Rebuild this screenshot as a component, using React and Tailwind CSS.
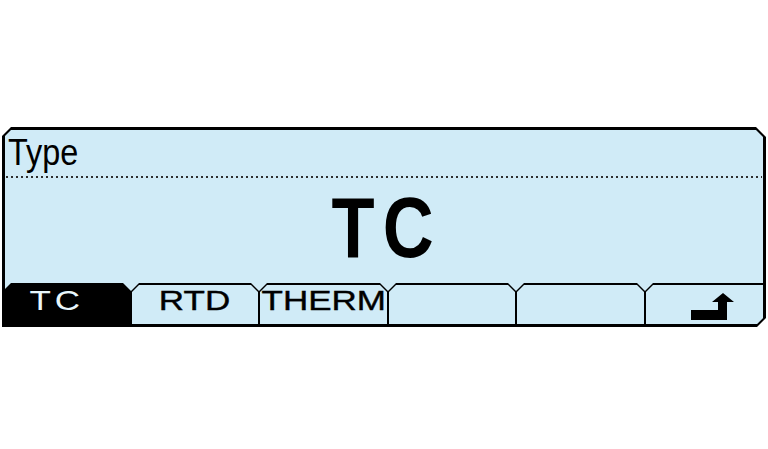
import React from 'react';

const FONT = { fontFamily: '"Liberation Sans", Arial, sans-serif' };

const tabOuter =
  'h-full bg-black pt-[2px] px-[1px] [clip-path:polygon(8px_0,calc(100%_-_8px)_0,100%_8px,100%_100%,0_100%,0_8px)]';
const tabInner =
  'h-full bg-[#d0ebf7] flex justify-center pt-[2px] [clip-path:polygon(7px_0,calc(100%_-_7px)_0,100%_7px,100%_100%,0_100%,0_7px)]';

function Tab({ width, label, active, last, children }) {
  if (active) {
    return (
      <div className={`${width} h-full bg-black flex justify-center pt-[4px] pr-[22px] [clip-path:polygon(6px_0,calc(100%_-_8px)_0,100%_8px,100%_100%,0_100%,0_6px)]`}>
        <span className="inline-block text-[28px] leading-none text-[#e8f6fb] tracking-[3px] scale-x-[1.25]">{label}</span>
      </div>
    );
  }
  return (
    <div className={`${width} ${last ? 'h-full bg-black pt-[2px] pl-[1px] [clip-path:polygon(8px_0,100%_0,100%_100%,0_100%,0_8px)]' : tabOuter}`}>
      <div className={last ? 'h-full bg-[#d0ebf7] relative [clip-path:polygon(7px_0,100%_0,100%_100%,0_100%,0_7px)]' : tabInner}>
        {label && (
          <span className="inline-block text-[28px] leading-none text-black scale-x-[1.25] [-webkit-text-stroke:0.4px_black]">{label}</span>
        )}
        {children}
      </div>
    </div>
  );
}

export default function App() {
  return (
    <div className="w-[768px] h-[449px] bg-white pt-[127px] px-[2px]" style={FONT}>
      <div className="w-[764px] h-[200px] bg-black p-[3px] [clip-path:polygon(9px_0,calc(100%_-_10px)_0,100%_10px,100%_calc(100%_-_9px),calc(100%_-_9px)_100%,0_100%,0_9px)]">
        <div className="h-full bg-[#d0ebf7] flex flex-col [clip-path:polygon(6px_0,calc(100%_-_7px)_0,100%_7px,100%_calc(100%_-_6px),calc(100%_-_6px)_100%,0_100%,0_6px)]">
          {/* header */}
          <div className="h-[46px] pt-[5px] pl-[3px]">
            <span className="inline-block origin-left text-[36px] leading-none text-black scale-x-90">Type</span>
          </div>
          <div className="h-[2px] mx-[1px] bg-[linear-gradient(to_right,#2e2e2e_50%,transparent_50%)] bg-[length:5px_2px]" />

          {/* value */}
          <div className="flex-1 flex justify-center pt-[6px]">
            <span className="inline-block text-[86px] leading-none font-bold text-black tracking-[10px] scale-x-[0.82] pl-[6px]">TC</span>
          </div>

          {/* soft keys */}
          <div className="h-[41px] flex">
            <Tab width="w-[126px]" label="TC" active />
            <Tab width="w-[128px]" label="RTD" />
            <Tab width="w-[129px]" label="THERM" />
            <Tab width="w-[128px]" />
            <Tab width="w-[129px]" />
            <Tab width="flex-1" last>
              <svg className="absolute left-[45px] top-[8px]" width="44" height="28" viewBox="0 0 44 28">
                <path d="M0 17H27V9H21L32 0L43 9H36V27H0Z" fill="black" />
              </svg>
            </Tab>
          </div>
        </div>
      </div>
    </div>
  );
}
